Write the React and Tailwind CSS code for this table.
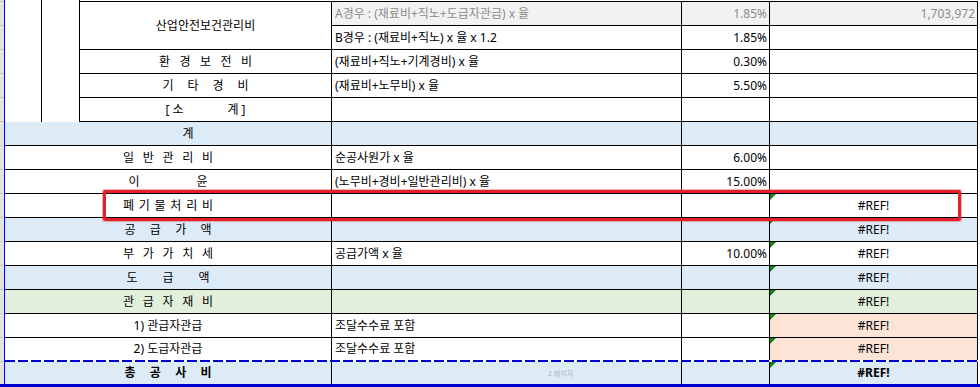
import React from "react";

function Spaced({ chars, w, className = "" }) {
  return (
    <div className={`flex justify-between ${w} ${className}`}>
      {chars.map((c, i) => (
        <span key={i}>{c}</span>
      ))}
    </div>
  );
}

function Tri() {
  return (
    <span className="absolute left-0 top-0 h-[6px] w-[6px] bg-[#128012] [clip-path:polygon(0_0,100%_0,0_100%)]" />
  );
}

// formula / rate / amount part shared by every row
function Tail({ formula, rate, amount, bg = "", amountBg = "", mark, muted, bold, page }) {
  const tone = muted ? "text-[#8c8c8c]" : "text-black";
  return (
    <>
      <div className={`relative flex w-[350px] items-center border-r border-black pl-[3px] ${bg} ${tone}`}>
        {formula}
        {page && (
          <span className="absolute left-[216px] top-[8px] text-[7px] leading-none text-[#b4b4b4]">2 페이지</span>
        )}
      </div>
      <div className={`flex w-[88px] items-center justify-end border-r border-black pr-[2px] ${bg} ${tone}`}>
        {rate}
      </div>
      <div
        className={`relative flex w-[208px] items-center border-r border-black ${
          amount === "#REF!" ? "justify-center" : "justify-end pr-[2px]"
        } ${amountBg || bg} ${tone} ${bold ? "font-bold" : ""}`}
      >
        {mark && <Tri />}
        {amount}
      </div>
    </>
  );
}

function LowRow({ label, bg = "bg-white", last, ...rest }) {
  return (
    <div className={`flex ${last ? "h-[22px]" : "h-[24px] border-b border-black"} ${bg}`}>
      <div className="flex w-[327px] items-center justify-center border-r border-black text-black">{label}</div>
      <Tail {...rest} />
    </div>
  );
}

export default function App() {
  const blue = "bg-[#ddebf7]";
  return (
    <div className="relative h-[387px] w-[980px] overflow-hidden bg-white font-['Noto_Sans','Noto_Sans_CJK_KR',sans-serif] text-[12px] leading-none">
      <div className="flex">
        <div className="w-[4px] bg-[#e4e4e4] bg-[repeating-linear-gradient(180deg,#e4e4e4_0px_23px,#c4c4c4_23px_24px)] bg-[position:0_2px]" />
        <div className="w-[974px] border-l border-[#0000ff]">
          {/* upper block with the merged side columns */}
          <div className="flex h-[122px]">
            <div className="w-[37px] border-r border-black" />
            <div className="w-[38px] border-r border-black" />
            <div className="w-[898px]">
              <div className="h-[1px]" />
              <div className="border-t border-black">
                <div className="flex h-[48px]">
                  <div className="flex w-[252px] items-center justify-center border-b border-r border-black text-black">
                    산업안전보건관리비
                  </div>
                  <div className="w-[646px]">
                    <div className="flex h-[24px] border-b border-black">
                      <Tail
                        formula="A경우 : (재료비+직노+도급자관급) x 율"
                        rate="1.85%"
                        amount="1,703,972"
                        bg="bg-[#f2f2f2]"
                        muted
                      />
                    </div>
                    <div className="flex h-[24px] border-b border-black">
                      <Tail formula="B경우 : (재료비+직노) x 율 x 1.2" rate="1.85%" />
                    </div>
                  </div>
                </div>
                <div className="flex h-[24px] border-b border-black">
                  <div className="flex w-[252px] items-center justify-center border-r border-black text-black">
                    <Spaced chars={["환", "경", "보", "전", "비"]} w="w-[93px]" />
                  </div>
                  <Tail formula="(재료비+직노+기계경비) x 율" rate="0.30%" />
                </div>
                <div className="flex h-[24px] border-b border-black">
                  <div className="flex w-[252px] items-center justify-center border-r border-black text-black">
                    <Spaced chars={["기", "타", "경", "비"]} w="w-[86px]" />
                  </div>
                  <Tail formula="(재료비+노무비) x 율" rate="5.50%" />
                </div>
                <div className="flex h-[24px] border-b border-black">
                  <div className="flex w-[252px] items-center justify-center border-r border-black text-black">
                    <Spaced chars={["[ 소", "계 ]"]} w="w-[80px]" />
                  </div>
                  <Tail />
                </div>
              </div>
            </div>
          </div>

          {/* lower block */}
          <LowRow bg={blue} label={<span className="ml-[40px]">계</span>} />
          <LowRow label={<Spaced chars={["일", "반", "관", "리", "비"]} w="w-[90px]" />} formula="순공사원가 x 율" rate="6.00%" />
          <LowRow label={<Spaced chars={["이", "윤"]} w="w-[79px]" />} formula="(노무비+경비+일반관리비) x 율" rate="15.00%" />
          <LowRow label={<Spaced chars={["폐", "기", "물", "처", "리", "비"]} w="w-[90px]" />} amount="#REF!" mark />
          <LowRow bg={blue} label={<Spaced chars={["공", "급", "가", "액"]} w="w-[87px]" />} amount="#REF!" mark />
          <LowRow label={<Spaced chars={["부", "가", "가", "치", "세"]} w="w-[90px]" />} formula="공급가액 x 율" rate="10.00%" amount="#REF!" mark />
          <LowRow bg={blue} label={<Spaced chars={["도", "급", "액"]} w="w-[83px]" />} amount="#REF!" mark />
          <LowRow bg="bg-[#e2efda]" label={<Spaced chars={["관", "급", "자", "재", "비"]} w="w-[90px]" />} amount="#REF!" mark />
          <LowRow label="1) 관급자관급" formula="조달수수료 포함" amount="#REF!" amountBg="bg-[#fce4d6]" mark />
          <LowRow last label="2) 도급자관급" formula="조달수수료 포함" amount="#REF!" amountBg="bg-[#fce4d6]" mark />
          <div className="h-[2px] bg-[repeating-linear-gradient(90deg,#0000cc_0px_10px,#ffffff_10px_13px)]" />
          <LowRow
            last
            bg={blue}
            label={<Spaced chars={["총", "공", "사", "비"]} w="w-[87px]" className="font-bold" />}
            amount="#REF!"
            mark
            bold
            page
          />
        </div>
      </div>
      <div className="h-[3px] w-full bg-[#0000cc]" />

      {/* red highlight box */}
      <div className="pointer-events-none absolute left-[103px] top-[190px] h-[31px] w-[858px] rounded-[2px] border-[3px] border-[#e5202a] shadow-[0_0_1px_1px_rgba(229,32,42,0.35)]" />
    </div>
  );
}
